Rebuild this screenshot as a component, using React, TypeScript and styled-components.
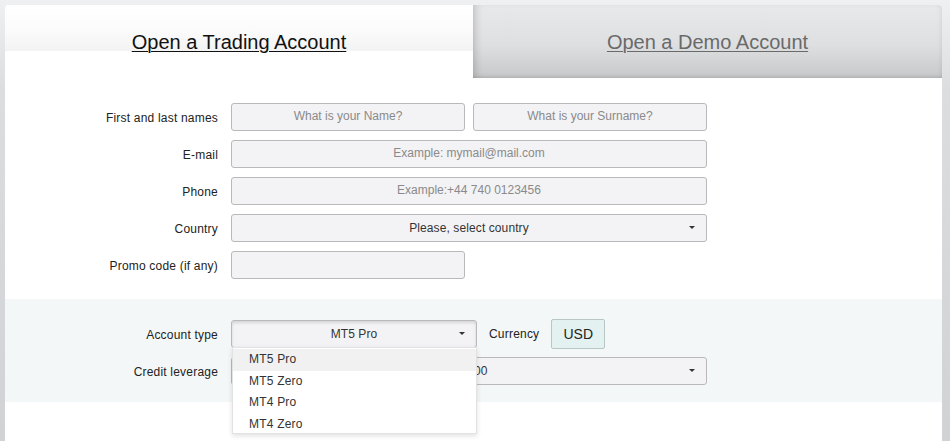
import React from 'react';
import styled, { createGlobalStyle } from 'styled-components';

const Global = createGlobalStyle`
  html, body { margin: 0; padding: 0; }
  body {
    height: 441px;
    overflow: hidden;
    background: linear-gradient(to bottom, #eef0f2 0px, #dcdde0 90px, #d1d2d5 441px);
    font-family: "Liberation Sans", Arial, Helvetica, sans-serif;
  }
`;

const Page = styled.div`
  box-sizing: border-box;
  height: 441px;
  padding: 5px 8px 0 5px;
`;

const Card = styled.div`
  position: relative;
  height: 436px;
  background: #fff;
  border-radius: 4px 4px 0 0;
`;

const Tabs = styled.div`
  display: flex;
  height: 73px;
`;

const Tab = styled.a<{ $active?: boolean }>`
  flex: ${p => (p.$active ? '0 0 468px' : '1 1 auto')};
  box-sizing: border-box;
  padding-top: 26px;
  text-align: center;
  font-size: 20px;
  line-height: 23px;
  text-decoration: underline;
  text-underline-offset: 2px;
  text-decoration-thickness: 1px;
  cursor: pointer;
  color: ${p => (p.$active ? '#111' : '#6a6a6a')};
  border-radius: ${p => (p.$active ? '4px 0 0 0' : '0 4px 0 0')};
  background: ${p =>
    p.$active
      ? 'linear-gradient(to bottom, #ffffff 0px, #fbfbfb 25px, #f3f3f3 46px, #ffffff 46px)'
      : 'linear-gradient(to bottom, #e8e9eb 0px, #dedfe1 40px, #c7c8ca 73px)'};
  box-shadow: ${p =>
    p.$active
      ? 'none'
      : 'inset 7px 0 8px -5px rgba(0,0,0,0.18), inset -4px 0 6px -4px rgba(0,0,0,0.08), inset 0 -3px 5px -3px rgba(0,0,0,0.18)'};
`;

const Body = styled.div`
  padding-top: 25px;
`;

const Grid = styled.div`
  display: grid;
  grid-template-columns: 213px 476px;
  column-gap: 13px;
  row-gap: 9px;
  align-items: center;
`;

const Label = styled.label`
  padding-top: 2px;
  text-align: right;
  font-size: 12px;
  letter-spacing: 0.2px;
  color: #222;
  white-space: nowrap;
`;

const Pair = styled.div`
  display: flex;
  gap: 8px;
`;

const Input = styled.input<{ $w?: number }>`
  box-sizing: border-box;
  width: ${p => (p.$w ? `${p.$w}px` : '100%')};
  height: 28px;
  margin: 0;
  padding: 0 8px 2px;
  border: 1px solid #b9b9bb;
  border-radius: 3px;
  background: #f3f3f5;
  font-family: inherit;
  font-size: 12px;
  color: #333;
  text-align: center;
  outline: none;
  &::placeholder { color: #8a8a8a; }
`;

const Select = styled.div<{ $w?: number; $pressed?: boolean }>`
  position: relative;
  box-sizing: border-box;
  width: ${p => (p.$w ? `${p.$w}px` : '100%')};
  height: 28px;
  display: flex;
  align-items: center;
  justify-content: center;
  border: 1px solid #b9b9bb;
  border-radius: 3px;
  background: #f3f3f5;
  font-size: 12px;
  letter-spacing: 0.1px;
  color: #333;
  box-shadow: ${p => (p.$pressed ? 'inset 0 2px 3px rgba(0,0,0,0.12)' : 'none')};
`;

const Caret = styled.span`
  position: absolute;
  right: 11px;
  top: 50%;
  margin-top: -2px;
  width: 0;
  height: 0;
  border-left: 3px solid transparent;
  border-right: 3px solid transparent;
  border-top: 3px solid #333;
`;

const Stripe = styled.div`
  margin-top: 20px;
  background: #f4f7f8;
  padding: 20px 0 17px;
`;

const StripeGrid = styled(Grid)`
  row-gap: 8px;
`;

const AccountRow = styled.div`
  display: flex;
  align-items: center;
  gap: 12px;
`;

const AccountCell = styled.div`
  position: relative;
`;

const InlineLabel = styled.span`
  font-size: 12px;
  letter-spacing: 0.2px;
  color: #222;
`;

const Currency = styled.div`
  box-sizing: border-box;
  width: 54px;
  height: 30px;
  display: flex;
  align-items: center;
  justify-content: center;
  background: #e3f1f0;
  border: 1px solid #b8c6c5;
  border-radius: 2px;
  font-size: 14px;
  color: #222;
`;

const Menu = styled.ul`
  position: absolute;
  z-index: 5;
  left: 1px;
  top: 27px;
  width: 245px;
  margin: 0;
  padding: 1px 0 0;
  list-style: none;
  background: #fff;
  border: 1px solid #e2e2e2;
  box-shadow: 0 2px 5px rgba(0,0,0,0.12);
  box-sizing: border-box;
  height: 87px;
`;

const MenuItem = styled.li<{ $hl?: boolean }>`
  height: 21.5px;
  line-height: 21.5px;
  padding-left: 16px;
  font-size: 12px;
  letter-spacing: 0.2px;
  color: #333;
  background: ${p => (p.$hl ? '#f1f1f1' : 'transparent')};
`;

const accountTypes = ['MT5 Pro', 'MT5 Zero', 'MT4 Pro', 'MT4 Zero'];

export default function App() {
  return (
    <>
      <Global />
      <Page>
        <Card>
          <Tabs>
            <Tab $active>Open a Trading Account</Tab>
            <Tab>Open a Demo Account</Tab>
          </Tabs>
          <Body>
            <Grid>
              <Label>First and last names</Label>
              <Pair>
                <Input $w={234} placeholder="What is your Name?" />
                <Input $w={234} placeholder="What is your Surname?" />
              </Pair>
              <Label>E-mail</Label>
              <Input placeholder="Example: mymail@mail.com" />
              <Label>Phone</Label>
              <Input placeholder="Example:+44 740 0123456" />
              <Label>Country</Label>
              <Select>
                Please, select country
                <Caret />
              </Select>
              <Label>Promo code (if any)</Label>
              <Input $w={234} />
            </Grid>
            <Stripe>
              <StripeGrid>
                <Label>Account type</Label>
                <AccountRow>
                  <AccountCell>
                    <Select $w={246} $pressed>
                      MT5 Pro
                      <Caret />
                    </Select>
                    <Menu>
                      {accountTypes.map((t, i) => (
                        <MenuItem key={t} $hl={i === 0}>{t}</MenuItem>
                      ))}
                    </Menu>
                  </AccountCell>
                  <InlineLabel>Currency</InlineLabel>
                  <Currency>USD</Currency>
                </AccountRow>
                <Label>Credit leverage</Label>
                <Select>
                  1:1000
                  <Caret />
                </Select>
              </StripeGrid>
            </Stripe>
          </Body>
        </Card>
      </Page>
    </>
  );
}
